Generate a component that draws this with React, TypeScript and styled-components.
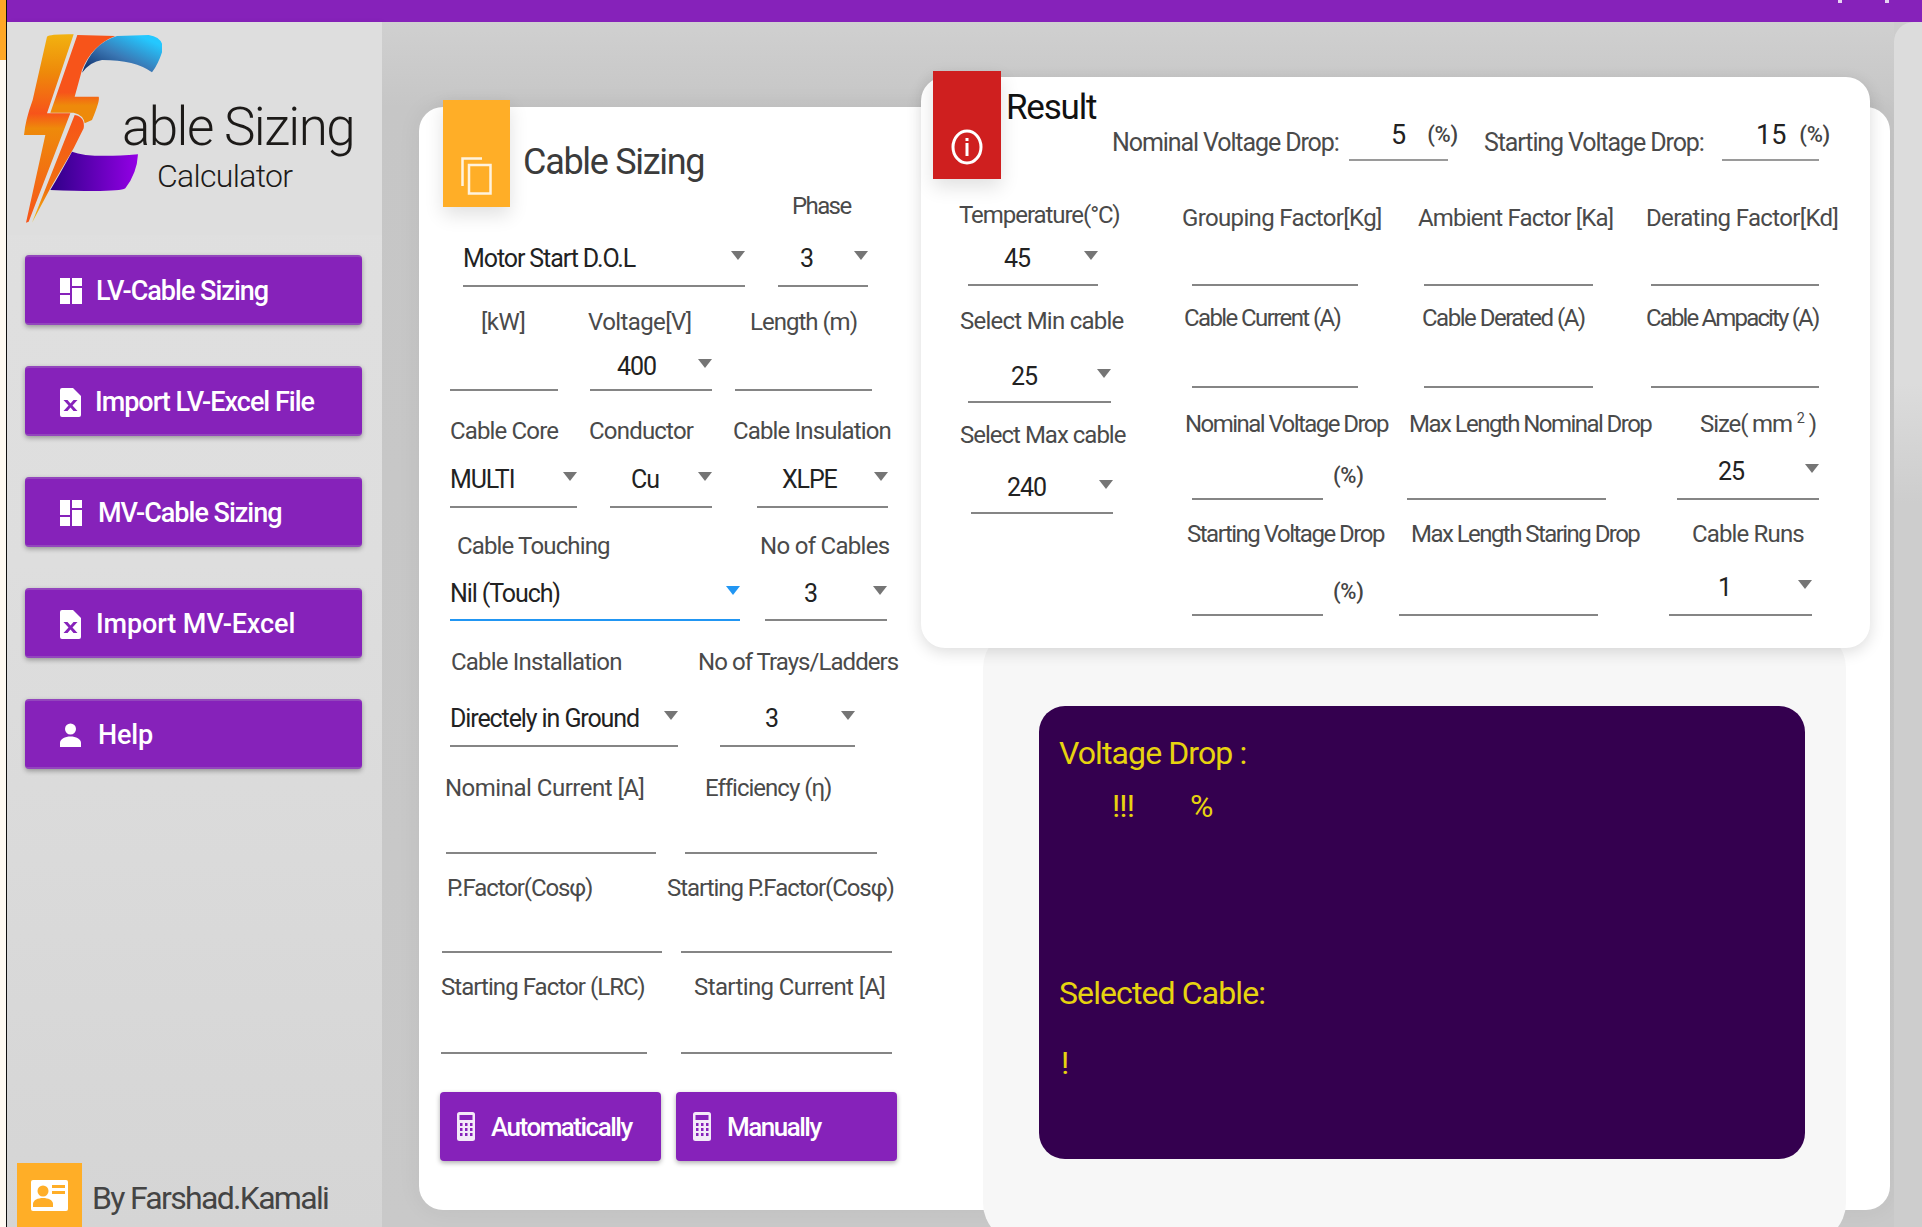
import React from 'react';
import styled, { createGlobalStyle } from 'styled-components';

const PURPLE = '#8622ba';
const ORANGE = '#ffae27';

const GlobalStyle = createGlobalStyle`
  html, body {
    margin: 0;
    padding: 0;
    overflow: hidden;
    background: #cdcdcd;
  }
  * { box-sizing: border-box; }
  body {
    font-family: Roboto, "Open Sans", sans-serif;
  }
`;

const Page = styled.div`
  display: flex;
  width: 1922px;
  height: 1227px;
  overflow: hidden;
`;

const EdgeStrip = styled.div`
  width: 7px;
  flex-shrink: 0;
  background: linear-gradient(#ffa726 0, #ffa726 60px, #fffaf2 60px);
  border-right: 1px solid #111;
`;

const Shell = styled.div`
  flex: 1;
  display: flex;
  flex-direction: column;
  min-width: 0;
`;

const TopBar = styled.div`
  height: 22px;
  flex-shrink: 0;
  background: ${PURPLE};
  display: flex;
  justify-content: flex-end;
  gap: 43px;
  padding-right: 33px;
`;

const WindowDot = styled.span`
  width: 4px;
  height: 3px;
  background: #e6d4f2;
`;

const Body = styled.div`
  flex: 1;
  display: flex;
  min-height: 0;
`;

const Sidebar = styled.aside`
  width: 375px;
  flex-shrink: 0;
  display: flex;
  flex-direction: column;
  background: linear-gradient(#e0e0e0, #dedede 45%, #d5d5d5);
  box-shadow: 2px 0 6px rgba(0, 0, 0, 0.04);
`;

const LogoArea = styled.div`
  height: 213px;
  background: #dedede;
  display: flex;
  padding: 10px 0 0 15px;
`;

const LogoText = styled.div`
  margin-left: -40px;
  padding-top: 63px;
  color: #1c1a18;
  white-space: nowrap;
`;

const LogoTitle = styled.div`
  font-size: 53px;
  line-height: 64px;
  font-weight: 300;
  letter-spacing: -1.6px;
`;

const LogoSub = styled.div`
  font-size: 32px;
  line-height: 34px;
  margin-left: 35px;
  font-weight: 300;
  letter-spacing: -0.7px;
`;

const NavList = styled.nav`
  display: flex;
  flex-direction: column;
  gap: 41px;
  padding: 20px 20px 0 18px;
`;

const NavButton = styled.div<{ $gap?: number; $track?: number }>`
  height: 70px;
  display: flex;
  align-items: center;
  gap: ${p => p.$gap || 14}px;
  padding: 2px 0 0 35px;
  border-radius: 4px;
  background: ${PURPLE};
  border-top: 2px solid #9346bd;
  border-bottom: 2px solid #9346bd;
  box-shadow: 0 2px 5px rgba(0, 0, 0, 0.32);
  color: #fff;
  font-size: 27px;
  font-weight: 500;
  letter-spacing: ${p => p.$track ?? -1}px;
  white-space: nowrap;
`;

const Footer = styled.div`
  margin-top: auto;
  display: flex;
  align-items: flex-end;
  gap: 10px;
  padding-left: 10px;
`;

const BadgeBox = styled.div`
  width: 65px;
  height: 64px;
  background: ${ORANGE};
  display: flex;
  align-items: center;
  justify-content: center;
`;

const FooterText = styled.div`
  font-size: 32px;
  line-height: 44px;
  padding-bottom: 7px;
  letter-spacing: -1.7px;
  color: #444;
`;

const Main = styled.main`
  flex: 1;
  min-width: 0;
  padding: 85px 4px 17px 37px;
  background: linear-gradient(#d0d0d0, #c6c6c6 85px, #c9c9c9);
`;

const SizingCard = styled.section`
  height: 1103px;
  display: flex;
  background: #fff;
  border-radius: 24px;
  box-shadow: 0 0 24px rgba(0, 0, 0, 0.06);
`;

const FormColumn = styled.div`
  width: 502px;
  flex-shrink: 0;
  padding-left: 22px;
`;

const FormHeader = styled.div`
  height: 83px;
  display: flex;
`;

const HeaderBox = styled.div<{ $bg: string; $w: number; $h: number }>`
  flex-shrink: 0;
  width: ${p => p.$w}px;
  height: ${p => p.$h}px;
  background: ${p => p.$bg};
  box-shadow: 0 8px 18px rgba(0, 0, 0, 0.12);
  display: flex;
  align-items: flex-end;
  justify-content: center;
`;

const FormBox = styled(HeaderBox)`
  margin: -7px 0 0 2px;
  padding-bottom: 12px;
`;

const FormTitle = styled.h1`
  margin: 32px 0 0 13px;
  font-size: 36px;
  line-height: 46px;
  font-weight: 400;
  letter-spacing: -1.3px;
  color: #3b3b3b;
  white-space: nowrap;
`;

const Row = styled.div<{ $h: number; $mt?: number }>`
  display: flex;
  height: ${p => p.$h}px;
  margin-top: ${p => p.$mt || 0}px;
`;

const Field = styled.div<{ $w: number; $ml?: number }>`
  width: ${p => p.$w}px;
  margin-left: ${p => p.$ml || 0}px;
  flex-shrink: 0;
  display: flex;
  flex-direction: column;
`;

const FieldLabel = styled.label<{ $indent?: number; $track?: number }>`
  margin-left: ${p => p.$indent || 0}px;
  padding-top: 1px;
  font-size: 24px;
  letter-spacing: ${p => p.$track ?? -0.85}px;
  line-height: 30px;
  color: #4a4a4a;
  white-space: nowrap;

  sup {
    font-size: 60%;
    line-height: 0;
  }
`;

const Control = styled.div<{ $active?: boolean }>`
  margin-top: auto;
  height: 48px;
  display: flex;
  align-items: flex-end;
  border-bottom: 2px solid ${p => (p.$active ? '#2196f3' : '#858585')};
`;

const Value = styled.span<{ $pad?: number; $drop?: number }>`
  padding: 0 0 ${p => 11 - (p.$drop || 0)}px ${p => p.$pad || 0}px;
  font-size: 25px;
  line-height: 30px;
  letter-spacing: -1.1px;
  color: #222;
  white-space: nowrap;
`;

const Percent = styled.span<{ $pad: number; $bottom?: number }>`
  padding: 0 0 ${p => p.$bottom ?? 9}px ${p => p.$pad}px;
  font-size: 22px;
  line-height: 30px;
  font-weight: 500;
  letter-spacing: -0.3px;
  color: #444;
  white-space: nowrap;
`;

const Arrow = styled.span<{ $active?: boolean; $drop?: number }>`
  margin: 0 0 ${p => 25 - (p.$drop || 0)}px auto;
  flex-shrink: 0;
  width: 0;
  height: 0;
  border-left: 7.5px solid transparent;
  border-right: 7.5px solid transparent;
  border-top: 9px solid ${p => (p.$active ? '#2196f3' : '#757575')};
`;

const Actions = styled.div`
  display: flex;
  gap: 15px;
  margin: 38px 0 0 -1px;
`;

const ActionButton = styled.div`
  width: 221px;
  height: 69px;
  display: flex;
  align-items: center;
  gap: 16px;
  padding-left: 17px;
  border-radius: 4px;
  background: ${PURPLE};
  box-shadow: 0 2px 5px rgba(0, 0, 0, 0.32);
  color: #fff;
  font-size: 26px;
  font-weight: 500;
  letter-spacing: -1.5px;
  white-space: nowrap;
`;

const RightColumn = styled.div`
  flex: 1;
  min-width: 0;
  margin-top: -30px;
  padding-right: 20px;
`;

const ResultCard = styled.section`
  position: relative;
  z-index: 1;
  height: 571px;
  background: #fff;
  border-radius: 24px;
  box-shadow: 0 4px 16px rgba(0, 0, 0, 0.14);
`;

const ResultHeader = styled.div`
  height: 122px;
  display: flex;
`;

const ResultBox = styled(HeaderBox)`
  margin: -6px 0 0 12px;
  padding-bottom: 14px;
`;

const ResultInfo = styled.div`
  margin-left: 5px;
`;

const ResultTitle = styled.h2`
  margin: 9px 0 0;
  font-size: 35px;
  line-height: 44px;
  font-weight: 400;
  letter-spacing: -1.2px;
  color: #111;
`;

const DropRow = styled.div`
  display: flex;
  height: 35px;
  margin: -4px 0 0 106px;
`;

const DropLabel = styled.div<{ $w: number; $ml?: number }>`
  width: ${p => p.$w}px;
  margin-left: ${p => p.$ml || 0}px;
  padding-top: 2px;
  font-size: 25px;
  line-height: 30px;
  letter-spacing: -1.1px;
  color: #4a4a4a;
  white-space: nowrap;
`;

const DropField = styled.div<{ $w: number }>`
  width: ${p => p.$w}px;
  display: flex;
  align-items: flex-end;
  border-bottom: 2px solid #9a9a9a;
`;

const DropValue = styled.span<{ $pad: number }>`
  padding: 0 0 9px ${p => p.$pad}px;
  font-size: 27px;
  line-height: 30px;
  color: #222;
`;

const ResultBody = styled.div`
  display: flex;
`;

const SideStack = styled.div`
  width: 229px;
  flex-shrink: 0;
`;

const ResultGrid = styled.div`
  flex: 1;
  min-width: 0;
`;

const GreyPanel = styled.div`
  width: 863px;
  height: 615px;
  margin: -20px 0 0 62px;
  padding: 78px 0 0 56px;
  background: #f7f7f7;
  border-radius: 40px;
`;

const DarkPanel = styled.div`
  width: 766px;
  height: 453px;
  padding: 27px 0 0 20px;
  background: #34004f;
  border-radius: 26px;
  color: #e7d30f;
  font-size: 32px;
  line-height: 40px;
  letter-spacing: -0.9px;
`;

const DarkRow = styled.div<{ $mt?: number; $ml?: number; $gap?: number }>`
  display: flex;
  gap: ${p => p.$gap || 0}px;
  margin: ${p => p.$mt || 0}px 0 0 ${p => p.$ml || 0}px;
`;

const Glyph = styled.svg<{ $w: number; $h: number }>`
  width: ${p => p.$w}px;
  height: ${p => p.$h}px;
  flex-shrink: 0;
  display: block;
`;

const Rail = styled.div`
  width: 28px;
  flex-shrink: 0;
  border-top-left-radius: 20px;
  background: linear-gradient(#dcdcdc, #dcdcdc 30%, #cdcdcd 40%);
`;

const LogoMark = () => (
  <Glyph $w={140} $h={192} viewBox="60 96 420 576" preserveAspectRatio="none">
    <defs>
      <linearGradient id="boltA" x1="0" y1="0" x2="0" y2="1">
        <stop offset="0" stopColor="#f2b210" />
        <stop offset="0.2" stopColor="#ee8a0a" />
        <stop offset="0.42" stopColor="#f7541a" />
        <stop offset="0.5" stopColor="#ee8a0a" />
        <stop offset="1" stopColor="#f7541a" />
      </linearGradient>
      <linearGradient id="boltB" x1="0" y1="0" x2="0" y2="1">
        <stop offset="0" stopColor="#f7541a" />
        <stop offset="0.65" stopColor="#f7541a" />
        <stop offset="0.8" stopColor="#ee8a0a" />
      </linearGradient>
      <linearGradient id="boltC" x1="0" y1="0" x2="0" y2="1">
        <stop offset="0" stopColor="#f7541a" />
        <stop offset="0.7" stopColor="#f0700f" />
        <stop offset="1" stopColor="#f2c010" />
      </linearGradient>
      <linearGradient id="blueArc" x1="0" y1="1" x2="1" y2="0">
        <stop offset="0" stopColor="#0a2460" />
        <stop offset="0.45" stopColor="#3a78b5" />
        <stop offset="0.85" stopColor="#24c8ff" />
      </linearGradient>
      <linearGradient id="violetArc" x1="0" y1="0" x2="1" y2="0">
        <stop offset="0" stopColor="#2f0088" />
        <stop offset="1" stopColor="#9400e6" />
      </linearGradient>
    </defs>
    <path fill="url(#blueArc)" d="M240 218 Q270 130 345 108 L440 105 Q485 112 482 150 Q470 190 450 217 Q400 180 300 180 Q265 185 240 218 Z" />
    <path fill="url(#violetArc)" d="M210 455 Q260 475 408 463 Q405 520 370 565 Q350 578 145 570 Q175 520 210 455 Z" />
    <path fill="url(#boltA)" d="M135 110 Q145 102 215 103 L135 340 L205 340 L80 665 L72 668 L130 405 L66 405 Q70 360 92 300 Z" />
    <path fill="url(#boltB)" d="M226 105 L340 108 Q270 135 240 210 L218 290 L290 290 Q295 300 270 360 L248 370 Q245 345 215 338 L145 338 Z" />
    <path fill="url(#boltC)" d="M218 345 Q250 350 245 385 L215 445 L145 565 L90 668 Z" />
  </Glyph>
);

const DashboardIcon = () => (
  <Glyph $w={22} $h={26} viewBox="0 0 22 26" preserveAspectRatio="none">
    <path fill="#fff" d="M0 0h10v15H0zM12 0h10v8H12zM12 10h10v16H12zM0 17h10v9H0z" />
  </Glyph>
);

const ExcelIcon = () => (
  <Glyph $w={21} $h={29} viewBox="0 0 21 29" preserveAspectRatio="none">
    <path
      fill="#fff"
      fillRule="evenodd"
      d="M2 0h11l8 8v19a2 2 0 0 1-2 2H2a2 2 0 0 1-2-2V2a2 2 0 0 1 2-2zM3.500 12l5 5.500-5 5.500h4l3-3.500 3 3.500h4l-5-5.500 5-5.500h-4l-3 3.500-3-3.500z"
    />
  </Glyph>
);

const PersonIcon = () => (
  <Glyph $w={21} $h={24} viewBox="0 0 21 24">
    <circle cx="10.5" cy="6" r="5.5" fill="#fff" />
    <path fill="#fff" d="M0 24v-4c0-4 5-6.500 10.500-6.500S21 16 21 20v4z" />
  </Glyph>
);

const CalculatorIcon = () => (
  <Glyph $w={18} $h={29} viewBox="0 0 18 29" preserveAspectRatio="none">
    <rect width="18" height="29" rx="2.500" fill="#f3eaf8" />
    <rect x="2.500" y="3" width="13" height="5" fill={PURPLE} />
    {[11, 16, 21].map(y =>
      [3, 8, 13].map(x => <rect key={`${x}-${y}`} x={x} y={y} width="2.500" height="3" fill={PURPLE} />)
    )}
  </Glyph>
);

const CopyIcon = () => (
  <Glyph $w={31} $h={38} viewBox="0 0 31 38" fill="none" stroke="#fff" strokeOpacity="0.85" strokeWidth="2.500">
    <path d="M21 1.500H1.500V29" />
    <rect x="8" y="8" width="21.500" height="28.500" />
  </Glyph>
);

const InfoIcon = () => (
  <Glyph $w={32} $h={36} viewBox="0 0 32 36" preserveAspectRatio="none">
    <ellipse cx="16" cy="18" rx="14" ry="16" fill="none" stroke="#fff" strokeWidth="3" />
    <rect x="14.500" y="9" width="3" height="3" fill="#fff" />
    <rect x="14.500" y="14" width="3" height="13" fill="#fff" />
  </Glyph>
);

const ContactIcon = () => (
  <Glyph $w={37} $h={31} viewBox="0 0 37 31">
    <rect width="37" height="31" rx="2" fill="#fff" />
    <circle cx="12" cy="11" r="5.500" fill={ORANGE} />
    <path fill={ORANGE} d="M2 27v-3c0-4 5-6 10-6s10 2 10 6v3z" />
    <path fill={ORANGE} d="M21 5h13v3H21zM21 11h13v3H21z" />
  </Glyph>
);

interface FieldProps {
  label?: React.ReactNode;
  w: number;
  ml?: number;
  indent?: number;
  track?: number;
}

interface SelectProps extends FieldProps {
  value: string;
  pad?: number;
  drop?: number;
  active?: boolean;
}

function Select({ label, w, ml, indent, track, value, pad, drop, active }: SelectProps) {
  return (
    <Field $w={w} $ml={ml}>
      {label && (
        <FieldLabel $indent={indent} $track={track}>
          {label}
        </FieldLabel>
      )}
      <Control $active={active}>
        <Value $pad={pad} $drop={drop}>
          {value}
        </Value>
        <Arrow $active={active} $drop={drop} />
      </Control>
    </Field>
  );
}

function Input({ label, w, ml, indent, track, percent }: FieldProps & { percent?: number }) {
  return (
    <Field $w={w} $ml={ml}>
      <FieldLabel $indent={indent} $track={track}>
        {label}
      </FieldLabel>
      <Control>
        {percent && (
          <Percent $pad={percent} $bottom={7}>
            (%)
          </Percent>
        )}
      </Control>
    </Field>
  );
}

export default function App() {
  return (
    <Page>
      <GlobalStyle />
      <EdgeStrip />
      <Shell>
        <TopBar>
          <WindowDot />
          <WindowDot />
        </TopBar>
        <Body>
          <Sidebar>
            <LogoArea>
              <LogoMark />
              <LogoText>
                <LogoTitle>able Sizing</LogoTitle>
                <LogoSub>Calculator</LogoSub>
              </LogoText>
            </LogoArea>
            <NavList>
              <NavButton>
                <DashboardIcon />
                LV-Cable Sizing
              </NavButton>
              <NavButton>
                <ExcelIcon />
                Import LV-Excel File
              </NavButton>
              <NavButton $gap={16}>
                <DashboardIcon />
                MV-Cable Sizing
              </NavButton>
              <NavButton $gap={15} $track={-0.1}>
                <ExcelIcon />
                Import MV-Excel
              </NavButton>
              <NavButton $gap={17} $track={-0.2}>
                <PersonIcon />
                Help
              </NavButton>
            </NavList>
            <Footer>
              <BadgeBox>
                <ContactIcon />
              </BadgeBox>
              <FooterText>By Farshad.Kamali</FooterText>
            </Footer>
          </Sidebar>

          <Main>
            <SizingCard>
              <FormColumn>
                <FormHeader>
                  <FormBox $bg={ORANGE} $w={67} $h={107}>
                    <CopyIcon />
                  </FormBox>
                  <FormTitle>Cable Sizing</FormTitle>
                </FormHeader>

                <Row $h={97}>
                  <Select w={282} ml={22} value="Motor Start D.O.L" />
                  <Select label="Phase" w={90} ml={33} indent={14} track={-1.6} value="3" pad={22} />
                </Row>
                <Row $h={85} $mt={19}>
                  <Input label="[kW]" w={108} ml={9} indent={31} track={-0.5} />
                  <Select label="Voltage[V]" w={122} ml={32} indent={-2} track={-0.6} value="400" pad={27} drop={4} />
                  <Input label="Length (m)" w={137} ml={23} indent={15} track={-1} />
                </Row>
                <Row $h={93} $mt={24}>
                  <Select label="Cable Core" w={127} ml={9} value="MULTI" />
                  <Select label="Conductor" w={102} ml={33} indent={-21} track={-0.8} value="Cu" pad={21} />
                  <Select label="Cable Insulation" w={131} ml={45} indent={-24} value="XLPE" pad={25} />
                </Row>
                <Row $h={91} $mt={22}>
                  <Select label="Cable Touching" w={290} ml={9} indent={7} value="Nil (Touch)" drop={1} active />
                  <Select label="No of Cables" w={122} ml={25} indent={-5} track={-0.7} value="3" pad={39} drop={1} />
                </Row>
                <Row $h={101} $mt={25}>
                  <Select label="Cable Installation" w={228} ml={9} indent={1} track={-0.8} value="Directely in Ground" />
                  <Select label="No of Trays/Ladders" w={135} ml={42} indent={-22} track={-0.95} value="3" pad={45} />
                </Row>
                <Row $h={82} $mt={25}>
                  <Input label="Nominal Current [A]" w={210} ml={5} indent={-1} track={-0.5} />
                  <Input label="Efficiency (η)" w={192} ml={29} indent={20} track={-1} />
                </Row>
                <Row $h={81} $mt={18}>
                  <Input label="P.Factor(Cosφ)" w={220} ml={1} indent={5} track={-1.1} />
                  <Input label="Starting P.Factor(Cosφ)" w={211} ml={19} indent={-14} track={-1.05} />
                </Row>
                <Row $h={83} $mt={18}>
                  <Input label="Starting Factor (LRC)" w={206} track={-0.95} />
                  <Input label="Starting Current [A]" w={211} ml={34} indent={13} track={-0.6} />
                </Row>

                <Actions>
                  <ActionButton>
                    <CalculatorIcon />
                    Automatically
                  </ActionButton>
                  <ActionButton>
                    <CalculatorIcon />
                    Manually
                  </ActionButton>
                </Actions>
              </FormColumn>

              <RightColumn>
                <ResultCard>
                  <ResultHeader>
                    <ResultBox $bg="#cf1f1f" $w={68} $h={108}>
                      <InfoIcon />
                    </ResultBox>
                    <ResultInfo>
                      <ResultTitle>Result</ResultTitle>
                      <DropRow>
                        <DropLabel $w={237}>Nominal Voltage Drop:</DropLabel>
                        <DropField $w={99}>
                          <DropValue $pad={42}>5</DropValue>
                          <Percent $pad={21}>(%)</Percent>
                        </DropField>
                        <DropLabel $w={238} $ml={36}>
                          Starting Voltage Drop:
                        </DropLabel>
                        <DropField $w={97}>
                          <DropValue $pad={34}>15</DropValue>
                          <Percent $pad={13}>(%)</Percent>
                        </DropField>
                      </DropRow>
                    </ResultInfo>
                  </ResultHeader>

                  <ResultBody>
                    <SideStack>
                      <Row $h={87}>
                        <Select label="Temperature(°C)" w={130} ml={47} indent={-9} track={-1.05} value="45" pad={36} drop={1} />
                      </Row>
                      <Row $h={98} $mt={19}>
                        <Select label="Select Min cable" w={143} ml={47} indent={-8} track={-0.75} value="25" pad={43} drop={2} />
                      </Row>
                      <Row $h={95} $mt={16}>
                        <Select label="Select Max cable" w={142} ml={50} indent={-11} track={-1} value="240" pad={36} drop={2} />
                      </Row>
                    </SideStack>
                    <ResultGrid>
                      <Row $h={84} $mt={3}>
                        <Input label="Grouping Factor[Kg]" w={166} ml={42} indent={-10} track={-0.65} />
                        <Input label="Ambient Factor [Ka]" w={169} ml={66} indent={-6} track={-0.8} />
                        <Input label="Derating Factor[Kd]" w={168} ml={58} indent={-5} track={-0.65} />
                      </Row>
                      <Row $h={86} $mt={16}>
                        <Input label="Cable Current (A)" w={166} ml={42} indent={-8} track={-1.6} />
                        <Input label="Cable Derated (A)" w={169} ml={66} indent={-2} track={-1.5} />
                        <Input label="Cable Ampacity (A)" w={168} ml={58} indent={-5} track={-1.85} />
                      </Row>
                      <Row $h={92} $mt={20}>
                        <Input label="Nominal Voltage Drop" w={131} ml={42} indent={-7} track={-1.55} percent={141} />
                        <Input label="Max Length Nominal Drop" w={199} ml={84} indent={2} track={-1.55} />
                        <Select
                          label={
                            <>
                              Size( mm <sup>2</sup> )
                            </>
                          }
                          w={142}
                          ml={71}
                          indent={23}
                          track={-1.1}
                          value="25"
                          pad={41}
                        />
                      </Row>
                      <Row $h={98} $mt={18}>
                        <Input label="Starting Voltage Drop" w={131} ml={42} indent={-5} track={-1.5} percent={141} />
                        <Input label="Max Length Staring Drop" w={199} ml={76} indent={12} track={-1.55} />
                        <Select label="Cable Runs" w={143} ml={71} indent={23} value="1" pad={49} />
                      </Row>
                    </ResultGrid>
                  </ResultBody>
                </ResultCard>

                <GreyPanel>
                  <DarkPanel>
                    <div>Voltage Drop :</div>
                    <DarkRow $mt={13} $ml={53} $gap={56}>
                      <span>!!!</span>
                      <span>%</span>
                    </DarkRow>
                    <DarkRow $mt={147}>Selected Cable:</DarkRow>
                    <DarkRow $mt={30} $ml={2}>
                      !
                    </DarkRow>
                  </DarkPanel>
                </GreyPanel>
              </RightColumn>
            </SizingCard>
          </Main>
          <Rail />
        </Body>
      </Shell>
    </Page>
  );
}
